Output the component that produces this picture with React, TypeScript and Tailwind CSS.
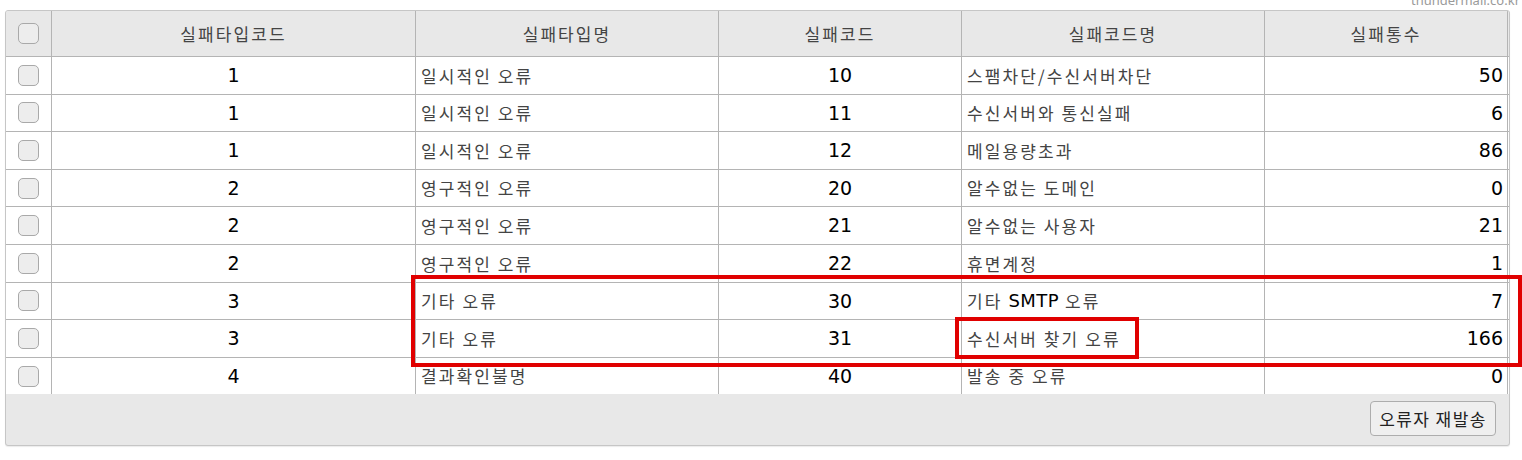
const rows = [
  { type: '1', typeName: '일시적인 오류', code: '10', codeName: '스팸차단/수신서버차단', count: '50' },
  { type: '1', typeName: '일시적인 오류', code: '11', codeName: '수신서버와 통신실패', count: '6' },
  { type: '1', typeName: '일시적인 오류', code: '12', codeName: '메일용량초과', count: '86' },
  { type: '2', typeName: '영구적인 오류', code: '20', codeName: '알수없는 도메인', count: '0' },
  { type: '2', typeName: '영구적인 오류', code: '21', codeName: '알수없는 사용자', count: '21' },
  { type: '2', typeName: '영구적인 오류', code: '22', codeName: '휴면계정', count: '1' },
  { type: '3', typeName: '기타 오류', code: '30', codeName: '기타 SMTP 오류', count: '7' },
  { type: '3', typeName: '기타 오류', code: '31', codeName: '수신서버 찾기 오류', count: '166' },
  { type: '4', typeName: '결과확인불명', code: '40', codeName: '발송 중 오류', count: '0' },
];

const grid = 'grid grid-cols-[46px_364px_303px_243px_303px_243px]';
const cell = 'flex items-center border-r border-[#b4b4b4]';
const kr = "font-['Noto_Sans_CJK_KR',sans-serif] text-[17px] tracking-[2.1px] text-[#444]";
const num = "font-['DejaVu_Sans','Noto_Sans_CJK_KR',sans-serif] text-[19px] text-black";

function Checkbox() {
  return <span className="block h-[21px] w-[21px] rounded-[5px] border border-[#a9a9a9] bg-[#ededed]" />;
}

export default function App() {
  return (
    <div className="relative h-[460px] w-[1522px] overflow-hidden bg-white">
      <div className="absolute right-[2px] top-[-9px] font-['Noto_Sans',sans-serif] text-[13px] text-[#9a9a9a]">
        thundermail.co.kr
      </div>

      <div className="ml-[5px] mt-[10px] flex h-[436px] w-[1505px] flex-col overflow-hidden rounded-[3px] border border-[#c6c6c6] bg-[#e8e8e8] shadow-[0_1px_1px_rgba(0,0,0,0.08)]">
        <div className={`${grid} h-[45px] bg-[#e8e8e8]`}>
          <div className={`${cell} justify-center`}>
            <Checkbox />
          </div>
          {['실패타입코드', '실패타입명', '실패코드', '실패코드명', '실패통수'].map((h) => (
            <div key={h} className={`${cell} justify-center ${kr}`}>
              {h}
            </div>
          ))}
        </div>

        {rows.map((r) => (
          <div key={r.code} className={`${grid} h-[37.6px] border-t border-[#b4b4b4] bg-white`}>
            <div className={`${cell} justify-center`}>
              <Checkbox />
            </div>
            <div className={`${cell} justify-center ${num}`}>{r.type}</div>
            <div className={`${cell} pl-[5px] ${kr}`}>{r.typeName}</div>
            <div className={`${cell} justify-center ${num}`}>{r.code}</div>
            <div className={`${cell} pl-[5px] ${kr}`}>
              {r.codeName.includes('SMTP') ? (
                <>
                  기타&nbsp;
                  <span className="font-['DejaVu_Sans',sans-serif] text-[18px] tracking-[0.5px] text-black">SMTP</span>
                  &nbsp;오류
                </>
              ) : (
                r.codeName
              )}
            </div>
            <div className={`${cell} justify-end pr-[4px] ${num}`}>{r.count}</div>
          </div>
        ))}

        <div className="flex flex-1 items-start justify-end pr-[13px] pt-[7px]">
          <button className="h-[35px] w-[126px] rounded-[4px] border border-[#adadad] bg-[#efefef] font-['Noto_Sans_CJK_KR',sans-serif] text-[17px] tracking-[1.4px] text-[#222]">
            오류자 재발송
          </button>
        </div>
      </div>

      <div className="pointer-events-none absolute left-[411px] top-[275px] h-[92px] w-[1111px] border-[4px] border-[#e00000]" />
      <div className="pointer-events-none absolute left-[955px] top-[317px] h-[42px] w-[184px] border-[4px] border-[#e00000]" />
    </div>
  );
}
